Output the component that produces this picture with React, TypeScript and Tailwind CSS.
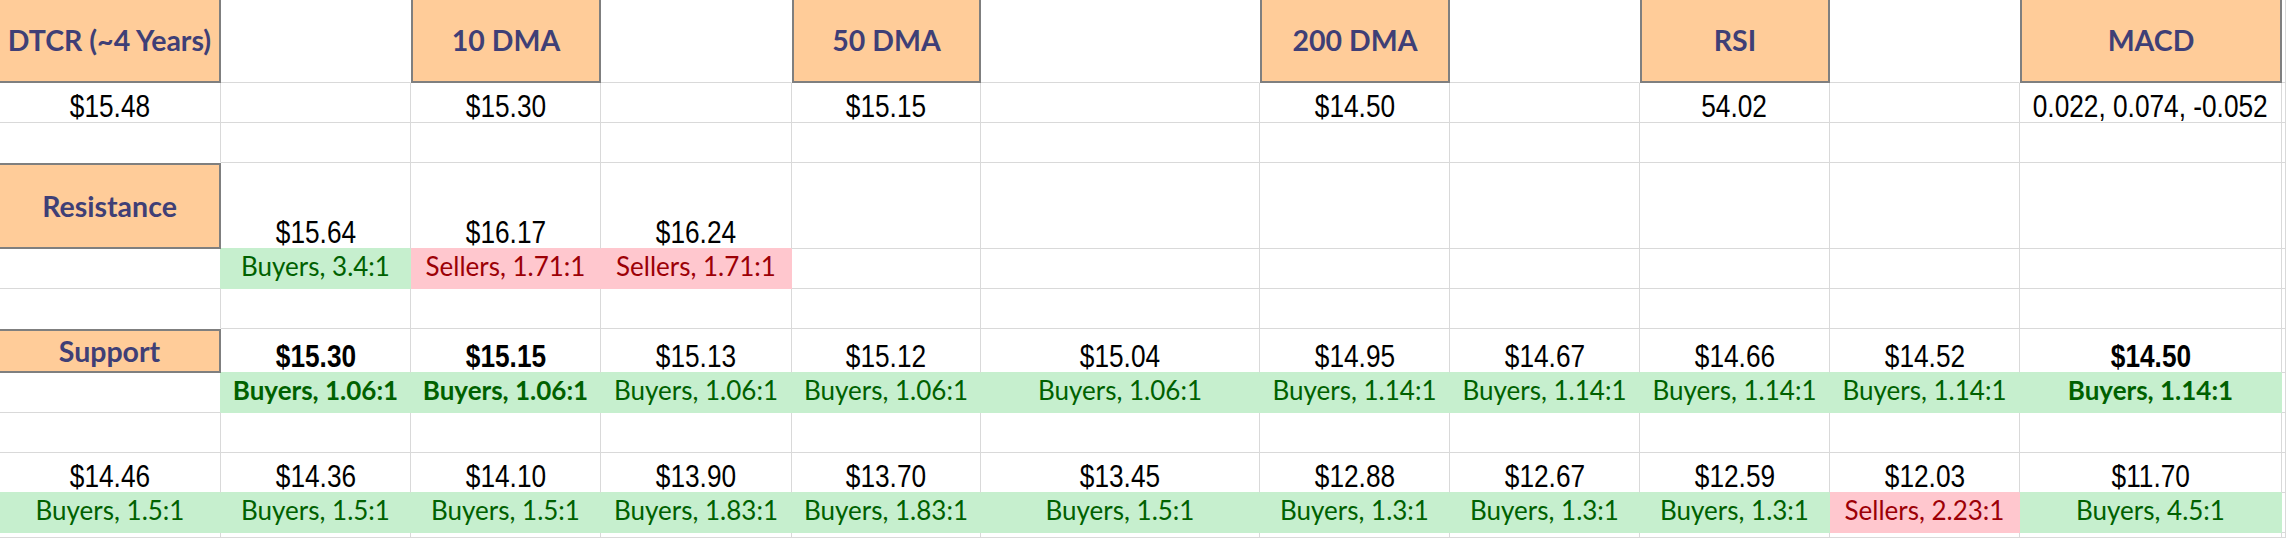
import React from "react";

type Kind = "e" | "v" | "vb" | "h" | "g" | "gb" | "r";
type Cell = { k: Kind; t?: string };

const E: Cell = { k: "e" };
const h = (t: string): Cell => ({ k: "h", t });
const v = (t: string): Cell => ({ k: "v", t });
const vb = (t: string): Cell => ({ k: "vb", t });
const g = (t: string): Cell => ({ k: "g", t: "Buyers, " + t });
const gb = (t: string): Cell => ({ k: "gb", t: "Buyers, " + t });
const r = (t: string): Cell => ({ k: "r", t: "Sellers, " + t });
const empties = (n: number): Cell[] => Array.from({ length: n }, () => E);

const rows: Cell[][] = [
  [h("DTCR (~4 Years)"), E, h("10 DMA"), E, h("50 DMA"), E, h("200 DMA"), E, h("RSI"), E, h("MACD"), E],
  [v("$15.48"), E, v("$15.30"), E, v("$15.15"), E, v("$14.50"), E, v("54.02"), E, v("0.022, 0.074, -0.052"), E],
  empties(12),
  [h("Resistance"), v("$15.64"), v("$16.17"), v("$16.24"), ...empties(8)],
  [E, g("3.4:1"), r("1.71:1"), r("1.71:1"), ...empties(8)],
  empties(12),
  [h("Support"), vb("$15.30"), vb("$15.15"), v("$15.13"), v("$15.12"), v("$15.04"), v("$14.95"), v("$14.67"), v("$14.66"), v("$14.52"), vb("$14.50"), E],
  [E, gb("1.06:1"), gb("1.06:1"), g("1.06:1"), g("1.06:1"), g("1.06:1"), g("1.14:1"), g("1.14:1"), g("1.14:1"), g("1.14:1"), gb("1.14:1"), E],
  empties(12),
  [v("$14.46"), v("$14.36"), v("$14.10"), v("$13.90"), v("$13.70"), v("$13.45"), v("$12.88"), v("$12.67"), v("$12.59"), v("$12.03"), v("$11.70"), E],
  [g("1.5:1"), g("1.5:1"), g("1.5:1"), g("1.83:1"), g("1.83:1"), g("1.5:1"), g("1.3:1"), g("1.3:1"), g("1.3:1"), r("2.23:1"), g("4.5:1"), E],
  empties(12),
];

type Edge = "grid" | "g" | "r" | "none";

const fillOf = (c: Cell | undefined): Edge | null => {
  if (!c) return null;
  if (c.k === "g" || c.k === "gb") return "g";
  if (c.k === "r") return "r";
  return null;
};

const rightCls: Record<Edge, string> = {
  grid: "border-r-[#d9d9d9]",
  g: "border-r-[#c6efce]",
  r: "border-r-[#ffc7ce]",
  none: "border-r-white",
};
const bottomCls: Record<Edge, string> = {
  grid: "border-b-[#d9d9d9]",
  g: "border-b-[#c6efce]",
  r: "border-b-[#ffc7ce]",
  none: "border-b-white",
};

function Text({ c }: { c: Cell }) {
  switch (c.k) {
    case "v":
      return (
        <span className="inline-block whitespace-nowrap scale-x-[0.82] font-['Liberation_Sans',Arial,sans-serif] text-[32px] leading-[32px] text-black">
          {c.t}
        </span>
      );
    case "vb":
      return (
        <span className="inline-block whitespace-nowrap scale-x-[0.82] font-['Liberation_Sans',Arial,sans-serif] text-[32px] leading-[32px] font-bold text-black">
          {c.t}
        </span>
      );
    case "g":
      return <span className="whitespace-nowrap font-['Lato',sans-serif] text-[26px] text-[#006100]">{c.t}</span>;
    case "gb":
      return <span className="whitespace-nowrap font-['Lato',sans-serif] text-[26px] font-bold text-[#006100]">{c.t}</span>;
    case "r":
      return <span className="whitespace-nowrap font-['Lato',sans-serif] text-[26px] text-[#9c0006]">{c.t}</span>;
    case "h":
      return <span className="whitespace-nowrap font-['Lato',sans-serif] text-[28.5px] font-bold text-[#3f3f76]">{c.t}</span>;
    default:
      return null;
  }
}

export default function App() {
  return (
    <div className="w-[2286px] h-[538px] overflow-hidden bg-white">
      <div className="grid grid-cols-[221px_190px_190px_191px_189px_279px_190px_190px_190px_190px_262px_4px] grid-rows-[83px_40px_40px_86px_40px_40px_44px_40px_40px_40px_40px_5px]">
        {rows.map((row, ri) =>
          row.map((c, ci) => {
            const key = `${ri}-${ci}`;
            if (c.k === "h") {
              const cls = [
                "flex items-center justify-center bg-[#ffcc99] border-[#7f7f7f] border-r-2 border-b-2",
                ci > 0 ? "border-l-2" : "",
                ri > 0 ? "border-t-2" : "",
              ].join(" ");
              return (
                <div key={key} className={cls}>
                  <Text c={c} />
                </div>
              );
            }
            const own = fillOf(c);
            const rightN = row[ci + 1];
            const belowN = rows[ri + 1]?.[ci];
            let re: Edge = "grid";
            if (own) re = own;
            else if (rightN && rightN.k === "h") re = "none";
            else if (fillOf(rightN)) re = fillOf(rightN)!;
            let be: Edge = "grid";
            if (own) be = own;
            else if (belowN && belowN.k === "h") be = "none";
            else if (fillOf(belowN)) be = fillOf(belowN)!;
            const bg = own === "g" ? "bg-[#c6efce]" : own === "r" ? "bg-[#ffc7ce]" : "bg-white";
            const pad = c.k === "v" || c.k === "vb" ? "pb-0" : "pb-[2px]";
            return (
              <div
                key={key}
                className={`flex items-end justify-center ${pad} border-r border-b ${rightCls[re]} ${bottomCls[be]} ${bg}`}
              >
                <Text c={c} />
              </div>
            );
          })
        )}
      </div>
    </div>
  );
}
